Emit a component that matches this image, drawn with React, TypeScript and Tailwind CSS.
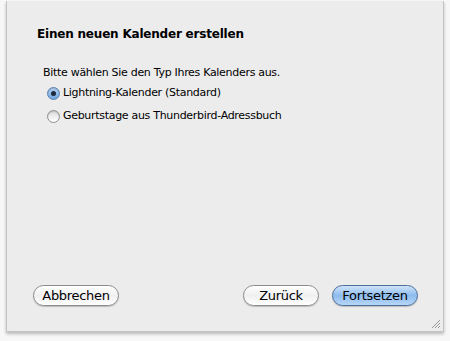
import React from "react";

function Radio({ checked, label }: { checked?: boolean; label: string }) {
  return (
    <label className="flex items-center gap-[3px] h-[23px]">
      <span
        className={`relative flex h-[13px] w-[13px] items-center justify-center rounded-full border shadow-[inset_0_1px_1px_rgba(0,0,0,0.15)] ${
          checked
            ? "border-[#5a7fae] bg-gradient-to-b from-[#b6d3f2] to-[#6ea4e0]"
            : "border-[#8e8e8e] bg-gradient-to-b from-[#dcdcdc] to-[#ffffff]"
        }`}
      >
        {checked && <span className="h-[5px] w-[5px] rounded-full bg-[#1c2a3c]" />}
      </span>
      <span>{label}</span>
    </label>
  );
}

function PillButton({ label, primary, width }: { label: string; primary?: boolean; width: string }) {
  return (
    <button
      className={`${width} h-[21px] rounded-full border text-[13px] leading-none tracking-[-0.3px] text-black shadow-[0_1px_1px_rgba(0,0,0,0.2)] ${
        primary
          ? "border-[#4d6f99] bg-gradient-to-b from-[#cfe3f8] via-[#8dbcef] to-[#b7d6f6]"
          : "border-[#8c8c8c] bg-gradient-to-b from-[#ffffff] via-[#f0f0f0] to-[#ffffff]"
      }`}
    >
      {label}
    </button>
  );
}

export default function App() {
  return (
    <div
      className="h-[341px] w-[450px] bg-[#f7f7f7] pl-[6px] pr-[6px] pt-[1px]"
      style={{ fontFamily: '"DejaVu Sans", "Liberation Sans", sans-serif' }}
    >
      <div className="relative flex h-[331px] w-[438px] flex-col border-l border-r border-b border-[#c4c4c4] bg-[#ececec] shadow-[0_2px_3px_rgba(0,0,0,0.25)]">
        <h1 className="pl-[30px] pt-[24px] text-[12px] font-bold tracking-[-0.2px] text-black">
          Einen neuen Kalender erstellen
        </h1>
        <div className="pl-[36px] pt-[21px] text-[11px] tracking-[-0.3px] text-black">
          <p className="h-[18px] leading-[18px]">Bitte wählen Sie den Typ Ihres Kalenders aus.</p>
          <div className="pl-[4px] pt-[0px]">
            <Radio checked label="Lightning-Kalender (Standard)" />
            <Radio label="Geburtstage aus Thunderbird-Adressbuch" />
          </div>
        </div>
        <div className="mt-auto flex items-center pb-[25px] pl-[26px] pr-[25px]">
          <PillButton label="Abbrechen" width="w-[86px]" />
          <div className="flex-1" />
          <PillButton label="Zurück" width="w-[76px]" />
          <div className="w-[13px]" />
          <PillButton label="Fortsetzen" width="w-[86px]" primary />
        </div>
        <svg className="absolute bottom-[2px] right-[2px]" width="11" height="11" viewBox="0 0 11 11">
          <path d="M10 2 L2 10 M10 5 L5 10 M10 8 L8 10" stroke="#9a9a9a" strokeWidth="1" />
        </svg>
      </div>
    </div>
  );
}
